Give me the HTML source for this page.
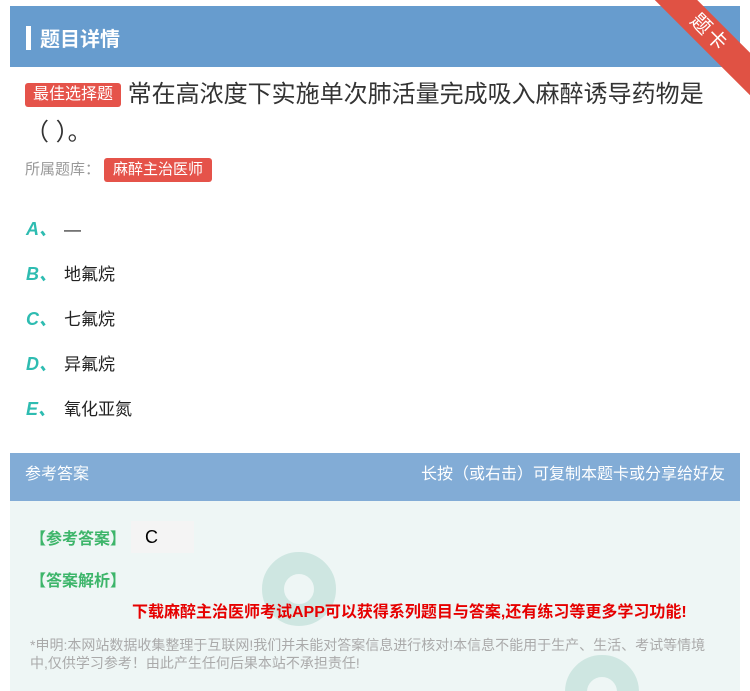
<!DOCTYPE html>
<html><head><meta charset="utf-8"><style>
html,body{margin:0;width:750px;height:691px;overflow:hidden}
body{background:#fff;font-family:"Liberation Sans","Noto Sans CJK SC",sans-serif;position:relative}
.hd{position:absolute;left:10px;top:6px;width:730px;height:61px;background:#679cce}
.hd .bar{position:absolute;left:16px;top:20px;width:5px;height:24px;background:#fff}
.hd .t{position:absolute;left:30px;top:17px;color:#fff;font-size:20px;font-weight:bold}
.rib{position:absolute;right:-34px;top:18px;width:150px;height:30px;background:#e05244;transform:rotate(45deg);color:#fff;font-size:20px;text-align:center;line-height:30px;letter-spacing:2px}
.tag{display:inline-block;background:#e5534a;color:#fff;border-radius:3px}
.q{position:absolute;left:25px;top:76px;width:705px;font-size:24px;line-height:38px;color:#333}
.q .tag{font-size:16px;line-height:24px;padding:0 8px;vertical-align:3px}
.lib{position:absolute;left:25px;top:158px;font-size:15px;color:#999}
.lib .tag{font-size:15px;line-height:24px;padding:0 9px;margin-left:4px}
.op{position:absolute;left:26px;font-size:17px;color:#222}
.op b{color:#2ebcb1;font-style:italic;display:inline-block;width:38px;font-size:18px}
.ans{position:absolute;left:10px;top:453px;width:730px;height:238px;background:#eef6f5;overflow:hidden}
.ah{height:48px;background:#82acd6;color:#fff;font-size:16px;line-height:44px;padding:0 15px}
.ah span{float:right}
.g{position:absolute;color:#3db56a;font-size:16px;font-weight:bold}
.red{position:absolute;left:132px;top:598px;color:#e60000;font-size:16px;font-weight:bold}
.dec{position:absolute;left:30px;top:636px;width:690px;color:#aaa;font-size:14px;line-height:18px}
.circ{position:absolute;border-radius:50%;border:22px solid #c5e2dc;opacity:.8}
</style></head><body>
<div class="hd"><div class="bar"></div><div class="t">题目详情</div></div>
<div class="rib">题卡</div>
<div class="q"><span class="tag">最佳选择题</span> 常在高浓度下实施单次肺活量完成吸入麻醉诱导药物是<br>（ ）。</div>
<div class="lib">所属题库：<span class="tag">麻醉主治医师</span></div>
<div class="op" style="top:215px"><b>A、</b>—</div>
<div class="op" style="top:260px"><b>B、</b>地氟烷</div>
<div class="op" style="top:305px"><b>C、</b>七氟烷</div>
<div class="op" style="top:350px"><b>D、</b>异氟烷</div>
<div class="op" style="top:395px"><b>E、</b>氧化亚氮</div>
<div class="ans"><div class="ah">参考答案<span>长按（或右击）可复制本题卡或分享给好友</span></div>
<div class="circ" style="left:252px;top:99px;width:30px;height:30px"></div>
<div class="circ" style="left:555px;top:202px;width:30px;height:30px"></div>
</div>
<div class="g" style="left:30px;top:525px">【参考答案】</div>
<div style="position:absolute;left:131px;top:521px;width:63px;height:32px;background:#f4f4f4;font-size:18px;line-height:32px;padding-left:14px;box-sizing:border-box">C</div>
<div class="g" style="left:30px;top:567px">【答案解析】</div>
<div class="red">下载麻醉主治医师考试APP可以获得系列题目与答案,还有练习等更多学习功能!</div>
<div class="dec">*申明:本网站数据收集整理于互联网!我们并未能对答案信息进行核对!本信息不能用于生产、生活、考试等情境中,仅供学习参考！由此产生任何后果本站不承担责任!</div>
</body></html>
